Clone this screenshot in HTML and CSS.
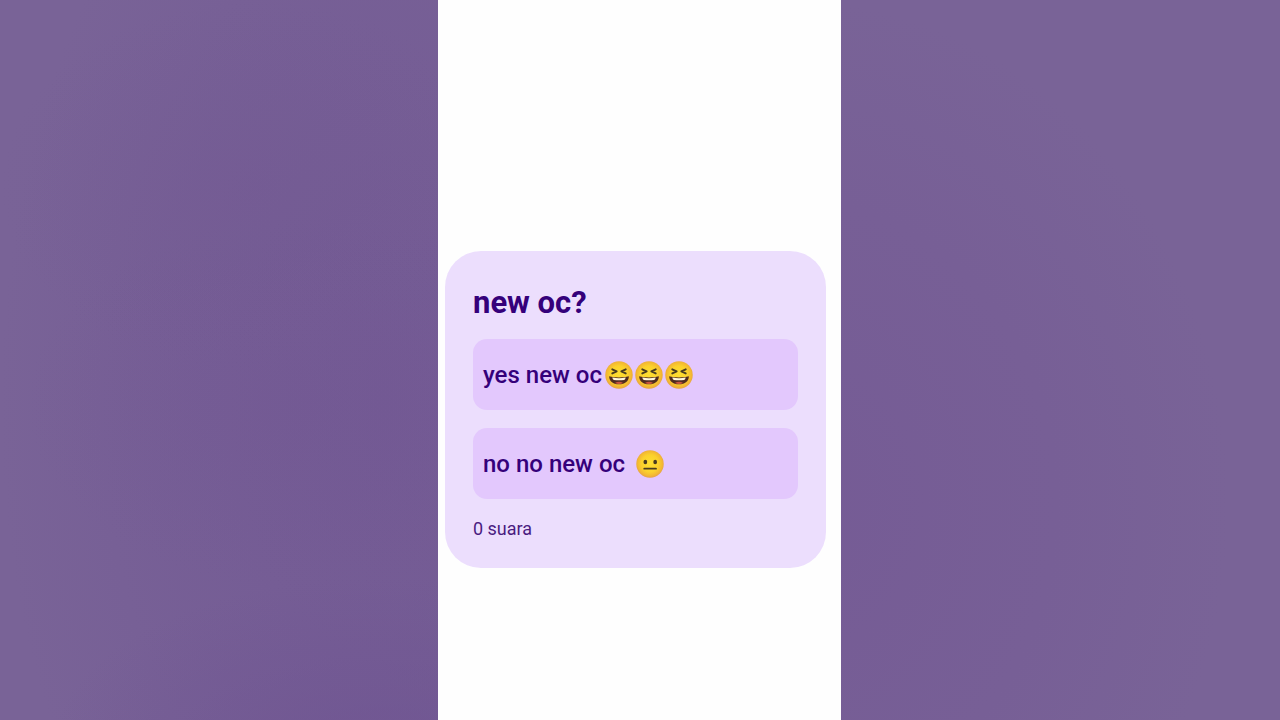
FILE: index.html
```html
<!DOCTYPE html>
<html lang="id">
<head>
<meta charset="utf-8">
<meta name="viewport" content="width=device-width, initial-scale=1">
<title>new oc?</title>
<link rel="stylesheet" href="styles.css">
</head>
<body>
<svg class="symbols" aria-hidden="true">
  <defs>
    <radialGradient id="face" cx="50%" cy="48%" r="52%">
      <stop offset="0" stop-color="#fedf32"/>
      <stop offset="0.6" stop-color="#fbd12c"/>
      <stop offset="0.86" stop-color="#f3b832"/>
      <stop offset="1" stop-color="#e6a344"/>
    </radialGradient>
    <symbol id="laugh" viewBox="0 0 54 54">
      <circle cx="27" cy="27" r="26.500" fill="url(#face)"/>
      <path d="M14 16 22.500 20 14 24M40 16 31.500 20 40 24" fill="none" stroke="#493c20" stroke-width="3.600" stroke-linecap="round" stroke-linejoin="round"/>
      <path d="M8 29.500C19 32.500 35 32.500 46 29.500C46 39 39 45 27 45S8 39 8 29.500Z" fill="#502c20"/>
      <path d="M14 32C22 34 32 34 40 32Q39.500 35.500 37 36.500Q27 38 17 36.500Q14.500 35.500 14 32Z" fill="#fff6dc"/>
      <path d="M19 42.500Q27 38 35 42.500Q27 46 19 42.500Z" fill="#c9543f"/>
    </symbol>
    <symbol id="neutral" viewBox="0 0 54 54">
      <circle cx="27" cy="27" r="26.500" fill="url(#face)"/>
      <ellipse cx="18" cy="23" rx="3.600" ry="4.300" fill="#493c20"/>
      <ellipse cx="37" cy="23" rx="3.600" ry="4.300" fill="#493c20"/>
      <path d="M16 36H38.500" stroke="#493c20" stroke-width="3.600" stroke-linecap="round"/>
    </symbol>
  </defs>
</svg>
<div class="stage">
  <main class="screen">
    <section class="poll" aria-labelledby="question">
      <h1 class="question" id="question">new oc?</h1>
      <div class="options">
        <button class="option" type="button">
          <span>yes new oc</span>
          <span class="faces">
            <svg class="emoji" role="img" aria-label="tertawa"><use href="#laugh"/></svg>
            <svg class="emoji" role="img" aria-label="tertawa"><use href="#laugh"/></svg>
            <svg class="emoji" role="img" aria-label="tertawa"><use href="#laugh"/></svg>
          </span>
        </button>
        <button class="option spaced" type="button">
          <span>no no new oc</span>
          <span class="faces">
            <svg class="emoji" role="img" aria-label="netral"><use href="#neutral"/></svg>
          </span>
        </button>
      </div>
      <p class="votes">0 suara</p>
    </section>
  </main>
</div>
</body>
</html>
```
FILE: styles.css
```css
* {
  box-sizing: border-box;
}

body {
  margin: 0;
  font-family: Roboto, "Liberation Sans", sans-serif;
  color: #35007a;
}

.symbols {
  position: absolute;
  width: 0;
  height: 0;
}

.stage {
  display: grid;
  grid-template-columns: minmax(0, 438fr) minmax(320px, 403fr) minmax(0, 439fr);
  min-height: 100vh;
  background:
    radial-gradient(ellipse 20% 26% at 20% 26%, #72599266, #72599200),
    radial-gradient(ellipse 22% 26% at 24% 56%, #72579366, #72579300),
    radial-gradient(ellipse 26% 24% at 30% 104%, #6e5391b0, #6e539100),
    radial-gradient(ellipse 30% 90% at 30% 56%, #735a94, #735a9480 60%, #735a9400),
    radial-gradient(ellipse 34% 70% at 62% 70%, #755b95, #755b9580 60%, #755b9500),
    #796397;
}

.screen {
  grid-column: 2;
  padding: 251px 15px 24px 7px;
  background: #fefefe;
}

.poll {
  padding: 32px 28px 27px;
  border-radius: 36px;
  background: #ecdefd;
}

.question {
  margin: 0 0 16px;
  font-size: 31px;
  font-weight: 700;
  line-height: 40px;
}

.options {
  display: grid;
  gap: 18px;
}

.option {
  display: flex;
  align-items: center;
  gap: 3px;
  width: 100%;
  min-height: 71px;
  padding: 9px 10px 8px;
  border: 0;
  border-radius: 14px;
  background: #e3c8fd;
  color: inherit;
  font-family: inherit;
  font-size: 24px;
  font-weight: 500;
  line-height: 32px;
  text-align: left;
  cursor: pointer;
}

.spaced {
  gap: 11px;
}

.faces {
  display: flex;
  gap: 2px;
}

.emoji {
  width: 28px;
  height: 28px;
}

.votes {
  margin: 18px 0 0;
  font-size: 18px;
  line-height: 24px;
  color: #4a1b80;
}
```
